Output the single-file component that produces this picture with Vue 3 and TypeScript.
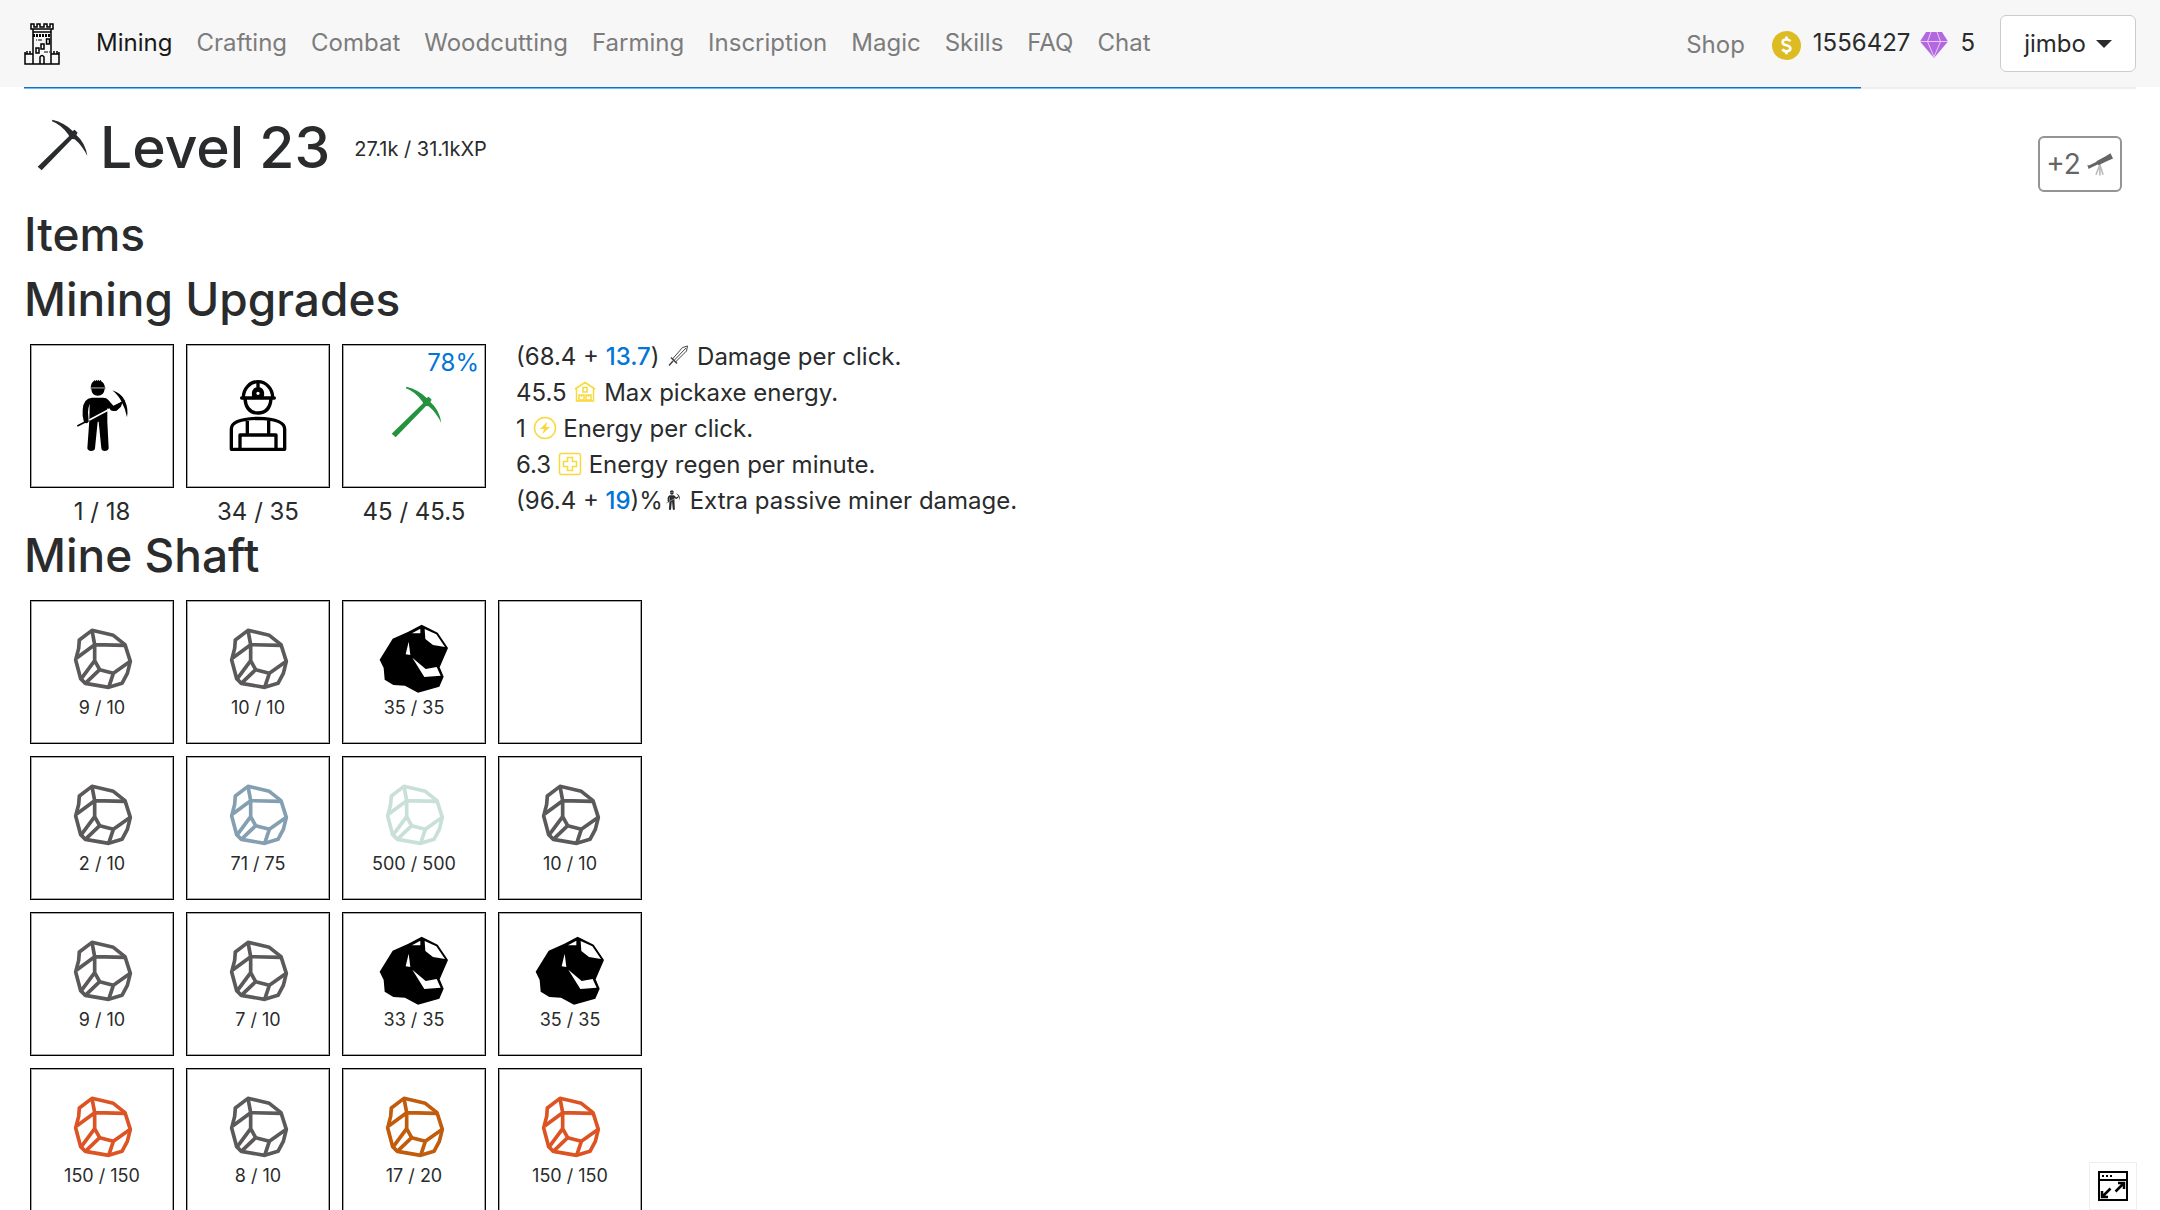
<script setup lang="ts">
import { h, type FunctionalComponent } from 'vue'

interface Upgrade {
  icon: 'miner' | 'worker' | 'pickaxe'
  label: string
  badge?: string
}

interface Rock {
  kind: 'ore' | 'coal'
  color: string
  hp: string
}

const links: string[] = [
  'Mining', 'Crafting', 'Combat', 'Woodcutting', 'Farming',
  'Inscription', 'Magic', 'Skills', 'FAQ', 'Chat',
]

const upgrades: Upgrade[] = [
  { icon: 'miner', label: '1 / 18' },
  { icon: 'worker', label: '34 / 35' },
  { icon: 'pickaxe', label: '45 / 45.5', badge: '78%' },
]

const stone = (hp: string): Rock => ({ kind: 'ore', color: '#5b5959', hp })
const coal = (hp: string): Rock => ({ kind: 'coal', color: '#000', hp })
const ore = (color: string, hp: string): Rock => ({ kind: 'ore', color, hp })

const shaft: (Rock | null)[] = [
  stone('9 / 10'), stone('10 / 10'), coal('35 / 35'), null,
  stone('2 / 10'), ore('#849fb1', '71 / 75'), ore('#c8e0d8', '500 / 500'), stone('10 / 10'),
  stone('9 / 10'), stone('7 / 10'), coal('33 / 35'), coal('35 / 35'),
  ore('#dd5424', '150 / 150'), stone('8 / 10'), ore('#c05c0c', '17 / 20'), ore('#dd5424', '150 / 150'),
]

const levelProgress = 87

const PickaxeIcon: FunctionalComponent = () =>
  h('svg', { viewBox: '0 0 216 216', 'aria-hidden': 'true' }, [
    h('path', {
      fill: 'currentColor',
      d: 'M85 23Q122 32 146 57L152 53L161 62L157 69Q184 92 190 132Q174 100 152 82L144 81L53 175L41 164L135 73L134 69Q112 38 84 28Z',
    }),
  ])

const MinerIcon: FunctionalComponent = () =>
  h('svg', { viewBox: '0 0 216 216', 'aria-hidden': 'true' }, [
    h('path', {
      fill: 'currentColor',
      d: 'M74 25Q76 10 83 7L86 3L89 7L91 2L94 6L97 2L100 6L104 3L107 8Q115 12 117 25ZM76 30H116Q114 50 95 50Q77 50 76 30Z',
    }),
    h('path', { fill: 'currentColor', opacity: '.7', d: 'M74 25H118V30H74Z' }),
    h('path', {
      fill: 'currentColor',
      d: 'M78 56H112Q122 56 127 63L142 80L166 69Q170 74 164 84L152 95Q140 98 132 92L124 88V128L128 208Q126 216 116 216Q107 216 106 208L98 128H95L87 208Q86 216 75 216Q65 215 64 208L70 124L71 74Q67 84 66 100L68 128Q62 136 54 130Q48 112 50 92Q52 58 78 56Z',
    }),
    h('path', { stroke: '#fff', 'stroke-width': '5', d: 'M70 123L132 90' }),
    h('path', { stroke: 'currentColor', 'stroke-width': '5', d: 'M34 141L62 127M148 82L176 66' }),
    h('path', { fill: 'currentColor', d: 'M139 34Q165 42 176 64Q188 90 183 115Q178 88 167 69Q158 50 139 34Z' }),
  ])
</script>

<template>
  <div class="page">
    <header class="navbar">
      <a class="brand" href="#" aria-label="Home">
        <svg viewBox="0 0 36 42" aria-hidden="true" fill="none" stroke="#000">
          <path d="M7 1v5h22V1h-3v3h-3V1h-3v3h-4V1h-3v3h-3V1zM9 6v3h18V6M9 9v32M27 9v32" stroke-width="1.5" />
          <path d="M9 12.500h18" stroke-width="3" stroke-dasharray="2 1" />
          <path d="M1 29v12h34V29M1 31h8M27 31h8M3 28v3M6 28v3M30 28v3M33 28v3" stroke-width="1.500" />
          <path d="M22.500 16h3v5h-3zM17 21h3v5h-3zM12 25h3v5h-3zM16 41v-7q2-3 4 0v7" stroke-width="1.500" />
          <path d="M12 17h1M14 17h4M20 29h4M25 29h1" />
        </svg>
      </a>
      <nav class="links" aria-label="Main">
        <a v-for="(link, i) in links" :key="link" href="#" :class="{ active: i === 0 }">{{ link }}</a>
      </nav>
      <a class="shop" href="#">Shop</a>
      <div class="wallet">
        <svg class="coin" viewBox="0 0 29 29" role="img" aria-label="Gold">
          <circle cx="14.500" cy="14.500" r="14.500" fill="#dcbc22" />
          <path d="M18.300 10.400q-1-1.900-3.900-1.900-3.800 0-3.800 2.700 0 2.300 3.800 3.100 4 .8 4 3.300 0 2.700-4 2.700-3 0-4-2.200M14.500 5.500v3M14.500 20v3.300" fill="none" stroke="#fff" stroke-width="2.600" />
        </svg>
        <span class="amount">1556427</span>
        <svg class="gem" viewBox="0 0 28 26" role="img" aria-label="Gems">
          <path d="M6 0h16l6 9.500L14 26 0 9.500z" fill="#b368e2" />
          <path d="M0 9.500h28M11 0L7.500 9.500 14 25l6.500-15.500L17 0" fill="none" stroke="#e6cdf6" stroke-width="1" />
        </svg>
        <span class="amount">5</span>
      </div>
      <button class="user" type="button" aria-haspopup="true">jimbo<span class="caret"></span></button>
    </header>
    <div class="track" role="progressbar" aria-label="Level progress" :aria-valuenow="levelProgress">
      <div class="fill" :style="{ width: levelProgress + '%' }"></div>
    </div>

    <main>
      <div class="title">
        <PickaxeIcon class="icon-lg" />
        <h1>Level 23</h1>
        <span class="xp">27.1k / 31.1kXP</span>
        <button class="scout" type="button">
          +2
          <svg viewBox="0 0 84 76" aria-hidden="true">
            <path d="M40 38L28 70M40 38V72M40 38L50 70" stroke="#bbb" stroke-width="5" />
            <path d="M58 12L73 3 81 19 65 26 45 36Q38 42 33 38L9 50 5 52 1 39 6 41 28 30 32 26Z" fill="#636567" />
          </svg>
        </button>
      </div>

      <h2>Items</h2>
      <h2>Mining Upgrades</h2>
      <div class="upgrades">
        <div v-for="u in upgrades" :key="u.icon" class="upgrade">
          <button class="tile" type="button" :aria-label="u.icon">
            <MinerIcon v-if="u.icon === 'miner'" class="icon-lg" />
            <svg v-else-if="u.icon === 'worker'" class="icon-lg" viewBox="0 0 216 216" aria-hidden="true" fill="none" stroke="#000" stroke-width="10" stroke-linecap="round" stroke-linejoin="round">
              <path d="M59 57H157M64 56A44 48 0 0 1 152 56M69 60Q73 102 108 102Q143 102 147 60" />
              <path d="M108 10V26M96 56Q90 30 108 29Q126 30 120 56" />
              <circle cx="108" cy="43" r="9" stroke-width="8" />
              <path d="M28 211V150Q28 120 108 118Q188 120 188 150V211ZM54 211V168H162V211M76 124V168M140 124V168" />
            </svg>
            <PickaxeIcon v-else class="icon-lg green" />
            <span v-if="u.badge" class="badge">{{ u.badge }}</span>
          </button>
          <span class="count">{{ u.label }}</span>
        </div>
        <ul class="stats">
          <li>
            (68.4 + <b>13.7</b>)
            <svg viewBox="0 0 24 24" aria-hidden="true" fill="none" stroke="#444" stroke-width="1">
              <path d="M21.500 2l-5 1.500L6.500 15l3 3L20.500 7zM20 4L8 16.500" />
              <path d="M5 13.500l6 6M7 17l-4 4.500" stroke-width="1.500" />
            </svg>
            Damage per click.
          </li>
          <li>
            45.5
            <svg class="yellow" viewBox="0 0 24 24" aria-hidden="true">
              <path d="M2 9l10-6.500L22 9M3.500 8.500V21h17V8.500M10 7.500h4V12h-4zM6 15h5v5H6zM13 15h5v5h-5zM8.500 15v2M15.500 15v2" />
            </svg>
            Max pickaxe energy.
          </li>
          <li>
            1
            <svg class="yellow" viewBox="0 0 24 24" aria-hidden="true">
              <circle cx="12" cy="12" r="10.500" />
              <path d="M14 6l-7 7h4l-1.500 5L17 11h-4z" class="solid" />
            </svg>
            Energy per click.
          </li>
          <li>
            6.3
            <svg class="yellow" viewBox="0 0 24 24" aria-hidden="true">
              <rect x="1.500" y="1.500" width="21" height="21" rx="2" />
              <path d="M9.500 5.500h5v4h4v5h-4v4h-5v-4h-4v-5h4z" />
            </svg>
            Energy regen per minute.
          </li>
          <li>(96.4 + <b>19</b>)%<MinerIcon class="slim" /> Extra passive miner damage.</li>
        </ul>
      </div>

      <h2>Mine Shaft</h2>
      <div class="shaft">
        <button v-for="(rock, i) in shaft" :key="i" class="tile" type="button" :aria-label="rock ? undefined : 'Empty'">
          <template v-if="rock">
            <svg v-if="rock.kind === 'ore'" class="icon-lg" viewBox="0 0 216 216" aria-hidden="true" fill="none" :stroke="rock.color" stroke-width="11" stroke-linejoin="round">
              <path d="M78 25L142 40 177 68 193 118 184 154 168 184 128 196 58 184 44 170 29 114 38 79 40 54Z" />
              <path d="M78 25L86 68 177 70M86 68L33 107M86 68V116L46 170M86 116L101 143 58 184M101 143L142 154 193 118M142 154L128 196" />
            </svg>
            <svg v-else class="icon-lg" viewBox="0 0 216 216" aria-hidden="true">
              <path fill="#000" fill-rule="evenodd" d="M131 8L179 32 210 78 185 136 197 164 184 194 120 212 81 191 46 189 20 173 17 138 5 113 44 50 91 29ZM140 21L142 51 165 69 201 75 175 37ZM127 20L102 34H127ZM92 59L83 97 97 99ZM103 107L139 165 188 161 176 135 143 141Z" />
            </svg>
            <span class="hp">{{ rock.hp }}</span>
          </template>
        </button>
      </div>
    </main>

    <button class="expand" type="button" aria-label="Pop out">
      <svg viewBox="0 0 30 30" aria-hidden="true" fill="none" stroke="#000" stroke-width="2">
        <path d="M1 1h28v28H1zM1 9h28" />
        <path d="M4 5h2M8 5h2M12 5h2" />
        <path d="M17.500 20.500L26 12M20 12h6v6M12.500 17.500L4 26M4 20v6h6" stroke-width="2.500" />
      </svg>
    </button>
  </div>
</template>

<style>
body {
  margin: 0;
}
</style>

<style scoped>
.page {
  height: 100vh;
  overflow: hidden auto;
  scrollbar-width: none;
  background: #fff;
  color: #292b2c;
  font: 24px/36px Inter, 'Liberation Sans', sans-serif;
}

a {
  color: inherit;
  text-decoration: none;
}

button {
  padding: 0;
  color: inherit;
  font: inherit;
  background: #fff;
  cursor: pointer;
}

svg {
  display: block;
}

.navbar {
  display: flex;
  align-items: center;
  box-sizing: border-box;
  height: 87px;
  padding: 0 24px;
  background: #f7f7f7;
}

.brand svg {
  width: 36px;
  height: 42px;
}

.links {
  display: flex;
  gap: 24px;
  margin-left: 36px;
  padding-bottom: 2px;
  color: #7c7c7c;
}

.links .active {
  color: #191919;
}

.shop {
  margin-left: auto;
  padding-top: 2px;
  color: #7c7c7c;
}

.wallet {
  display: flex;
  align-items: center;
  margin: 0 25px 0 24px;
}

.amount {
  padding-bottom: 2px;
}

.coin {
  width: 29px;
  height: 29px;
  margin: 3px 12px 0 3px;
}

.gem {
  width: 28px;
  height: 26px;
  margin: 2px 12px 0 10px;
}

.user {
  display: flex;
  align-items: center;
  justify-content: center;
  gap: 10px;
  box-sizing: border-box;
  width: 136px;
  height: 57px;
  border: 1px solid #ccc;
  border-radius: 6px;
}

.caret {
  border: 8px solid transparent;
  border-top-color: #292b2c;
  border-bottom: 0;
}

.track {
  height: 2px;
  margin: 0 24px;
  background: #eee;
}

.fill {
  height: 1px;
  border-bottom: 1px solid #7ab7ea;
  background: #0f72cc;
}

main {
  padding: 23px 24px 0;
}

.icon-lg {
  width: 72px;
  height: 72px;
}

.title {
  display: flex;
  align-items: center;
  height: 72px;
  margin-bottom: 24px;
}

h1,
h2 {
  margin: 0;
  font-weight: 500;
}

h1 {
  margin: 0 24px 0 4px;
  font-size: 57px;
  line-height: 66px;
}

h2 {
  margin-bottom: 12px;
  font-size: 46px;
  line-height: 53px;
}

.xp {
  padding-top: 2px;
  font-size: 20px;
}

.scout {
  display: flex;
  align-items: center;
  justify-content: center;
  align-self: flex-start;
  gap: 6px;
  box-sizing: border-box;
  width: 84px;
  height: 56px;
  margin: 24px 14px 0 auto;
  border: 2px solid #939495;
  border-radius: 6px;
  color: #636567;
  font-size: 28px;
}

.scout svg {
  width: 27px;
  height: 25px;
}

.upgrades {
  display: flex;
}

.upgrade {
  display: flex;
  flex-direction: column;
  align-items: center;
}

.tile {
  position: relative;
  display: flex;
  flex-direction: column;
  align-items: center;
  justify-content: center;
  box-sizing: border-box;
  width: 144px;
  height: 144px;
  margin: 6px;
  padding-bottom: 2px;
  border: 1px solid #000;
  box-shadow: inset 0 0 0 1px #a6a6a6;
}

.upgrade .tile {
  color: #000;
}

.count {
  line-height: 35px;
}

.tile .green {
  color: #24923e;
}

.badge {
  position: absolute;
  top: 0;
  right: 6px;
  color: #0275d8;
}

.stats {
  margin: 0;
  padding: 1px 0 0 24px;
  list-style: none;
}

.stats b {
  color: #0275d8;
  font-weight: 500;
}

.stats svg {
  display: inline-block;
  width: 24px;
  height: 24px;
  vertical-align: -3px;
}

.stats .slim {
  width: 20px;
}

.yellow {
  fill: none;
  stroke: #f8d93c;
  stroke-width: 1.5px;
}

.yellow .solid {
  fill: #f8d93c;
  stroke: none;
}

.shaft {
  display: grid;
  grid-template-columns: repeat(4, max-content);
}

.hp {
  font-size: 18px;
  line-height: 27px;
}

.expand {
  position: fixed;
  right: 23px;
  bottom: 0;
  display: flex;
  align-items: center;
  justify-content: center;
  width: 48px;
  height: 48px;
  border: 1px solid #eee;
}

.expand svg {
  width: 30px;
  height: 30px;
}
</style>
